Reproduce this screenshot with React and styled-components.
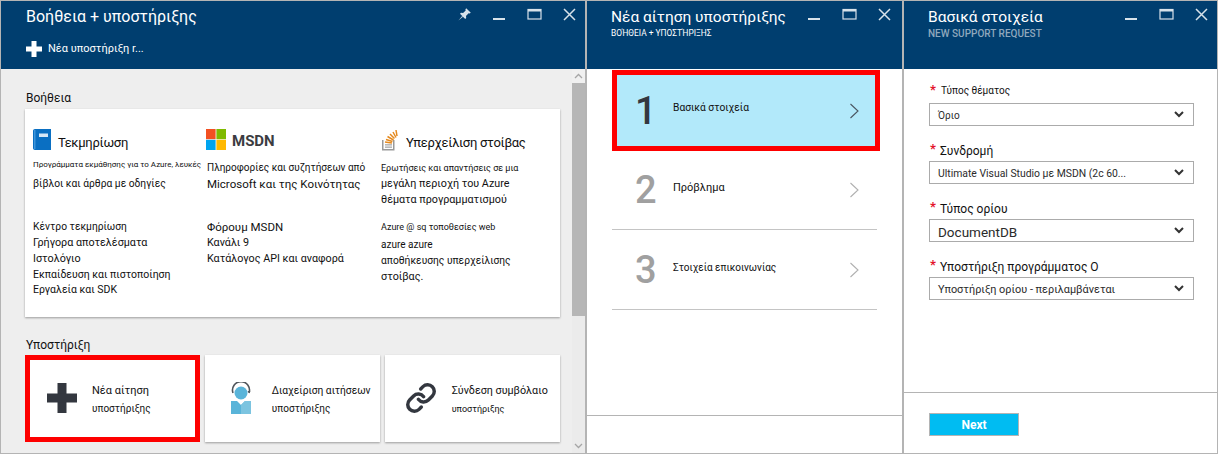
import React from 'react';
import styled, { createGlobalStyle } from 'styled-components';
import { Link as LinkIcon } from 'lucide-react';

const GlobalStyle = createGlobalStyle`
  html, body { margin: 0; padding: 0; background: #fff; }
  body { font-family: Roboto, "Liberation Sans", sans-serif; color: #111; }
  * { box-sizing: border-box; }
`;

const Page = styled.div`
  width: 1218px;
  height: 454px;
  display: flex;
  overflow: hidden;
  border: 1px solid #b4b4b4;
`;

const Blade = styled.section`
  width: ${(p) => p.$width}px;
  flex: ${(p) => (p.$grow ? 1 : 'none')};
  display: flex;
  flex-direction: column;
  border-right: ${(p) => p.$divider}px solid #b4b4b4;
`;

const Header = styled.header`
  height: 68px;
  flex: none;
  background: #003e6f;
  color: #fff;
  display: flex;
  flex-direction: column;
  padding-left: ${(p) => p.$left}px;
`;

const TitleRow = styled.div`
  display: flex;
  justify-content: space-between;
  padding-right: ${(p) => p.$right}px;
`;

const TitleBlock = styled.div`
  padding-top: 5px;
`;

const Title = styled.h1`
  margin: 0;
  font-size: ${(p) => p.$size || 15.5}px;
  line-height: 22px;
  font-weight: 400;
  white-space: nowrap;
`;

const Subtitle = styled.div`
  font-size: ${(p) => p.$size}px;
  line-height: 11px;
  font-weight: ${(p) => p.$weight || 400};
  color: ${(p) => p.$color || '#fff'};
  white-space: nowrap;
`;

const Controls = styled.div`
  display: flex;
  gap: 20px;
  padding-top: 6px;
  flex: none;
`;

const ControlIcon = styled.svg`
  width: 15px;
  height: 15px;
  display: block;
  color: #d7e2ea;
`;

const CommandBar = styled.div`
  display: flex;
  align-items: center;
  gap: 6px;
  margin-top: 13px;
  font-size: 11px;
  line-height: 16px;
`;

const BladeBody = styled.div`
  flex: 1;
  min-height: 0;
  display: flex;
  background: ${(p) => p.$bg || '#fff'};
`;

const Scroller = styled.div`
  flex: 1;
  min-width: 0;
  padding: 21px 12px 0 24px;
`;

const SectionLabel = styled.div`
  font-size: 12px;
  line-height: 16px;
  margin-left: ${(p) => p.$left || 1}px;
  margin-top: ${(p) => p.$top || 0}px;
`;

const Card = styled.div`
  margin-top: 3px;
  height: 208px;
  background: #fff;
  box-shadow: 0 1px 2px rgba(0, 0, 0, 0.35);
  padding: 17px 0 0 8px;
  display: grid;
  grid-template-columns: 174px 174px 1fr;
`;

const Column = styled.div`
  display: flex;
  flex-direction: column;
`;

const ColumnHead = styled.div`
  height: 34px;
  display: flex;
  align-items: flex-start;
  gap: ${(p) => p.$gap}px;
  margin-left: ${(p) => p.$shift || 0}px;
  padding-top: 3px;
`;

const ColumnTitle = styled.span`
  font-size: 13px;
  letter-spacing: -0.3px;
  line-height: 28px;
  white-space: nowrap;
`;

const MsdnTitle = styled.span`
  font-size: 15px;
  font-weight: 700;
  line-height: 24px;
  color: #3c3c41;
`;

const Blurb = styled.div`
  height: 59px;
`;

const Line = styled.div`
  font-size: ${(p) => p.$size || 10.75}px;
  line-height: ${(p) => p.$lh || 16}px;
  white-space: nowrap;
`;

const TileRow = styled.div`
  display: flex;
  gap: 4.5px;
  margin-top: 2px;
`;

const Tile = styled.div`
  flex: 1 1 0;
  min-width: 0;
  height: 87px;
  background: #fff;
  display: flex;
  align-items: center;
  box-shadow: ${(p) =>
    p.$selected ? 'inset 0 0 0 5px #fe0000' : '0 1px 2px rgba(0, 0, 0, 0.35)'};
`;

const TileIcon = styled.div`
  width: 67px;
  flex: none;
  padding: 0 0 2px 6px;
  display: flex;
  justify-content: center;
  color: #33373f;
`;

const TileText = styled.div`
  display: flex;
  flex-direction: column;
  gap: 2px;
  padding-top: 2px;
  white-space: nowrap;
`;

const TileName = styled.span`
  font-size: ${(p) => p.$size || 11}px;
  line-height: 16px;
`;

const TileHint = styled.span`
  font-size: ${(p) => p.$size || 10}px;
  line-height: 16px;
`;

const Scrollbar = styled.div`
  width: 13px;
  flex: none;
  background: #ebebeb;
  display: flex;
  flex-direction: column;
  justify-content: space-between;
`;

const ScrollArrow = styled.div`
  height: 14px;
  background: ${(p) => p.$bg || 'transparent'};
  display: flex;
  align-items: center;
  justify-content: center;
  color: #a6a6a6;
`;

const ScrollThumb = styled.div`
  width: 13px;
  height: 233px;
  background: #b6b6b6;
`;

const ScrollTop = styled.div`
  display: flex;
  flex-direction: column;
`;

const Steps = styled.div`
  flex: 1;
  padding: 1px 0 0 25px;
  display: flex;
  flex-direction: column;
`;

const Step = styled.div`
  width: ${(p) => (p.$active ? 268 : 265)}px;
  height: ${(p) => p.$height}px;
  display: flex;
  align-items: center;
  background: ${(p) => (p.$active ? '#b2e9fa' : '#fff')};
  border: ${(p) => (p.$active ? '5px solid #fe0000' : 'none')};
  border-bottom: ${(p) => (p.$active ? '5px solid #fe0000' : '1px solid #c4c4c4')};
  padding-left: ${(p) => (p.$active ? 18 : 23)}px;
`;

const StepNumber = styled.span`
  width: 38px;
  font-size: 38px;
  line-height: 44px;
  font-weight: 500;
  color: ${(p) => (p.$active ? '#33373f' : '#a0a0a0')};
  flex: none;
`;

const StepText = styled.span`
  flex: 1;
  font-size: ${(p) => p.$size || 10.5}px;
  line-height: 16px;
  padding-bottom: ${(p) => (p.$active ? 6 : 4)}px;
`;

const StepArrow = styled.svg`
  width: 10px;
  height: 16px;
  flex: none;
  margin-right: ${(p) => (p.$active ? 16 : 18)}px;
  color: ${(p) => (p.$active ? '#4a5560' : '#b0b0b0')};
`;

const FooterSlot = styled.div`
  height: ${(p) => p.$height}px;
  flex: none;
  border-top: 1px solid #b4b4b4;
  padding: 20px 0 0 25px;
`;

const NextButton = styled.button`
  width: 90px;
  height: 23px;
  border: 1px solid #b4b4b4;
  background: #00bcf2;
  color: #fff;
  font-family: Roboto, sans-serif;
  font-size: 12px;
  font-weight: 700;
  padding: 0;
  display: block;
`;

const Form = styled.div`
  flex: 1;
  padding: 12px 23px 0 25px;
  display: flex;
  flex-direction: column;
`;

const Field = styled.div`
  margin-bottom: 17px;
`;

const FieldLabel = styled.div`
  height: ${(p) => (p.$small ? 22 : 18)}px;
  padding-bottom: ${(p) => (p.$small ? 4 : 2)}px;
  display: flex;
  align-items: center;
  font-size: ${(p) => (p.$small ? 10 : 12)}px;
  white-space: nowrap;
`;

const Star = styled.span`
  color: #e3142a;
  width: ${(p) => (p.$small ? 12 : 11)}px;
  margin-top: ${(p) => (p.$small ? 0 : -5)}px;
  font-size: 13px;
  line-height: 12px;
  font-weight: 700;
  padding-left: 1px;
  flex: none;
`;

const Select = styled.div`
  width: 265px;
  height: 23px;
  border: 1px solid #ababab;
  display: flex;
  align-items: center;
  justify-content: space-between;
  padding: 2px 9px 0 8px;
  font-size: ${(p) => p.$size}px;
  color: #2b2b2b;
  white-space: nowrap;
`;

const Caret = styled.svg`
  width: 10px;
  height: 7px;
  flex: none;
  margin-top: -2px;
`;

function Pin() {
  return (
    <ControlIcon viewBox="0 0 15 15" fill="currentColor">
      <path d="M9.2 1.2 13.8 5.8 12.6 6.6 11.6 6.3 9 8.9 9.2 11 8.2 12 3 6.8 4 5.8 6.1 6 8.7 3.4 8.4 2.4Z" />
      <path d="M5.2 9 1.4 13.6 6 9.8Z" />
    </ControlIcon>
  );
}

function Minimize() {
  return (
    <ControlIcon viewBox="0 0 15 15" fill="currentColor">
      <rect x="1" y="11" width="12" height="2" />
    </ControlIcon>
  );
}

function Maximize() {
  return (
    <ControlIcon viewBox="0 0 15 15" fill="none" stroke="currentColor">
      <rect x="1" y="2.5" width="13" height="9.5" strokeWidth="1.2" />
      <rect x="1" y="2" width="13" height="2.5" fill="currentColor" stroke="none" />
    </ControlIcon>
  );
}

function Close() {
  return (
    <ControlIcon viewBox="0 0 15 15" fill="none" stroke="currentColor" strokeWidth="1.5">
      <path d="M2 2 13 13M13 2 2 13" />
    </ControlIcon>
  );
}

function BookIcon() {
  return (
    <svg width="18" height="21" viewBox="0 0 18 21">
      <path d="M2 0H18V21H2C.8 21 0 20.2 0 19V2C0 .8.8 0 2 0Z" fill="#0a6fc2" />
      <rect x="1" y="1" width="1.5" height="19" fill="#3f95da" />
      <rect x="6" y="4.5" width="9" height="3.5" fill="#d6e8f7" />
    </svg>
  );
}

function MsLogo() {
  return (
    <svg width="20" height="21" viewBox="0 0 20 21">
      <rect width="9.6" height="10.2" fill="#f25022" />
      <rect x="10.4" width="9.6" height="10.2" fill="#7fba00" />
      <rect y="10.8" width="9.6" height="10.2" fill="#00a4ef" />
      <rect x="10.4" y="10.8" width="9.6" height="10.2" fill="#ffb900" />
    </svg>
  );
}

function StackIcon() {
  return (
    <svg width="17" height="22" viewBox="0 0 17 22">
      <path d="M1 11H2.5V20H12V11H13.5V21.5H1Z" fill="#9a9a9a" />
      <g fill="#a8a8a8">
        <rect x="4" y="17.5" width="7" height="1.3" />
        <rect x="4" y="15.2" width="7" height="1.3" />
      </g>
      <g stroke="#e58a1f" strokeWidth="1.5">
        <path d="M4 13 11 14" />
        <path d="M5 10.5 11.5 12.5" />
        <path d="M6.5 7.5 12.5 11" />
        <path d="M9 5 13.5 9.5" />
        <path d="M12 3 15 8.5" />
        <path d="M15 1 16 7" />
      </g>
    </svg>
  );
}

function PersonIcon() {
  return (
    <svg width="22" height="32" viewBox="0 0 22 32">
      <path d="M3 11A8.5 8.5 0 1 1 19 11" fill="none" stroke="#50565c" strokeWidth="1.6" />
      <path d="M19 11 20.5 9H17.5Z" fill="#50565c" />
      <circle cx="11" cy="11" r="6.5" fill="#59b4d9" />
      <path d="M1 19H7L11 23 15 19H21V32H1Z" fill="#59b4d9" />
      <path d="M11 23 15 19H21V32H11Z" fill="#7cc4e0" />
    </svg>
  );
}

function PlusIcon({ size, color, bar }) {
  const at = (size - bar) / 2;
  return (
    <svg width={size} height={size} viewBox={`0 0 ${size} ${size}`} fill={color}>
      <rect x={at} width={bar} height={size} />
      <rect y={at} width={size} height={bar} />
    </svg>
  );
}

function Chevron({ active }) {
  return (
    <StepArrow $active={active} viewBox="0 0 10 16" fill="none" stroke="currentColor" strokeWidth="1.1">
      <path d="M1.5 1 9 8 1.5 15" />
    </StepArrow>
  );
}

function ScrollChevron({ down }) {
  return (
    <svg width="9" height="6" viewBox="0 0 9 6" fill="none" stroke="currentColor" strokeWidth="1.3">
      <path d={down ? 'M1 1 4.5 4.5 8 1' : 'M1 5 4.5 1.5 8 5'} />
    </svg>
  );
}

function Dropdown({ size, children }) {
  return (
    <Select $size={size}>
      {children}
      <Caret viewBox="0 0 10 7" fill="none" stroke="#333" strokeWidth="2">
        <path d="M1 1 5 5 9 1" />
      </Caret>
    </Select>
  );
}

const fields = [
  { label: 'Τύπος θέματος', small: true, size: 10, value: 'Όριο' },
  { label: 'Συνδρομή', size: 10.4, value: 'Ultimate Visual Studio με MSDN (2c 60...' },
  { label: 'Τύπος ορίου', size: 13.5, value: 'DocumentDB' },
  { label: 'Υποστήριξη προγράμματος Ο', size: 10.9, value: 'Υποστήριξη ορίου - περιλαμβάνεται' },
];

export default function App() {
  return (
    <Page>
      <GlobalStyle />
      <Blade $width={586} $divider={2}>
        <Header $left={25}>
          <TitleRow $right={8}>
            <TitleBlock>
              <Title $size={16}>Βοήθεια + υποστήριξης</Title>
            </TitleBlock>
            <Controls>
              <Pin />
              <Minimize />
              <Maximize />
              <Close />
            </Controls>
          </TitleRow>
          <CommandBar>
            <PlusIcon size={16} color="#fff" bar={5} />
            Νέα υποστήριξη r...
          </CommandBar>
        </Header>
        <BladeBody $bg="#eeeeee">
          <Scroller>
            <SectionLabel>Βοήθεια</SectionLabel>
            <Card>
              <Column>
                <ColumnHead $gap={7}>
                  <BookIcon />
                  <ColumnTitle>Τεκμηρίωση</ColumnTitle>
                </ColumnHead>
                <Blurb>
                  <Line $size={8} $lh={10}>Προγράμματα εκμάθησης για το Azure, λευκές</Line>
                  <Line $size={10.25} $lh={28}>βίβλοι και άρθρα με οδηγίες</Line>
                </Blurb>
                <Line $size={10.25}>Κέντρο τεκμηρίωση</Line>
                <Line>Γρήγορα αποτελέσματα</Line>
                <Line>Ιστολόγιο</Line>
                <Line $size={10.5}>Εκπαίδευση και πιστοποίηση</Line>
                <Line $size={10.5} $lh={14}>Εργαλεία και SDK</Line>
              </Column>
              <Column>
                <ColumnHead $gap={6} $shift={-1}>
                  <MsLogo />
                  <MsdnTitle>MSDN</MsdnTitle>
                </ColumnHead>
                <Blurb>
                  <Line $size={10}>Πληροφορίες και συζητήσεων από</Line>
                  <Line $size={11.5}>Microsoft και της Κοινότητας</Line>
                </Blurb>
                <Line $size={11.5}>Φόρουμ MSDN</Line>
                <Line>Κανάλι 9</Line>
                <Line>Κατάλογος API και αναφορά</Line>
              </Column>
              <Column>
                <ColumnHead $gap={8}>
                  <StackIcon />
                  <ColumnTitle>Υπερχείλιση στοίβας</ColumnTitle>
                </ColumnHead>
                <Blurb>
                  <Line $size={9}>Ερωτήσεις και απαντήσεις σε μια</Line>
                  <Line>μεγάλη περιοχή του Azure</Line>
                  <Line>θέματα προγραμματισμού</Line>
                </Blurb>
                <Line $size={9}>Azure @ sq τοποθεσίες web</Line>
                <Line $size={10} $lh={20}>azure azure</Line>
                <Line $size={10.25} $lh={12}>αποθήκευσης υπερχείλισης</Line>
                <Line $lh={20}>στοίβας.</Line>
              </Column>
            </Card>
            <SectionLabel $left={0} $top={20}>Υποστήριξη</SectionLabel>
            <TileRow>
              <Tile $selected>
                <TileIcon>
                  <PlusIcon size={30} color="#33373f" bar={9} />
                </TileIcon>
                <TileText>
                  <TileName>Νέα αίτηση</TileName>
                  <TileHint>υποστήριξης</TileHint>
                </TileText>
              </Tile>
              <Tile>
                <TileIcon>
                  <PersonIcon />
                </TileIcon>
                <TileText>
                  <TileName $size={10.25}>Διαχείριση αιτήσεων</TileName>
                  <TileHint>υποστήριξης</TileHint>
                </TileText>
              </Tile>
              <Tile>
                <TileIcon>
                  <LinkIcon size={32} strokeWidth={2.6} />
                </TileIcon>
                <TileText>
                  <TileName $size={10.75}>Σύνδεση συμβόλαιο</TileName>
                  <TileHint $size={9}>υποστήριξης</TileHint>
                </TileText>
              </Tile>
            </TileRow>
          </Scroller>
          <Scrollbar>
            <ScrollTop>
              <ScrollArrow $bg="#f0f0f0">
                <ScrollChevron />
              </ScrollArrow>
              <ScrollThumb />
            </ScrollTop>
            <ScrollArrow>
              <ScrollChevron down />
            </ScrollArrow>
          </Scrollbar>
        </BladeBody>
      </Blade>

      <Blade $width={317} $divider={2}>
        <Header $left={24}>
          <TitleRow $right={10}>
            <TitleBlock>
              <Title>Νέα αίτηση υποστήριξης</Title>
              <Subtitle $size={8.4}>ΒΟΉΘΕΙΑ + ΥΠΟΣΤΉΡΙΞΗΣ</Subtitle>
            </TitleBlock>
            <Controls>
              <Minimize />
              <Maximize />
              <Close />
            </Controls>
          </TitleRow>
        </Header>
        <BladeBody>
          <Steps>
            <Step $active $height={81}>
              <StepNumber $active>1</StepNumber>
              <StepText $active $size={10.25}>Βασικά στοιχεία</StepText>
              <Chevron active />
            </Step>
            <Step $height={79}>
              <StepNumber>2</StepNumber>
              <StepText $size={11}>Πρόβλημα</StepText>
              <Chevron />
            </Step>
            <Step $height={80}>
              <StepNumber>3</StepNumber>
              <StepText $size={10}>Στοιχεία επικοινωνίας</StepText>
              <Chevron />
            </Step>
          </Steps>
        </BladeBody>
        <FooterSlot $height={38} />
      </Blade>

      <Blade $grow $divider={0}>
        <Header $left={24}>
          <TitleRow $right={8}>
            <TitleBlock>
              <Title>Βασικά στοιχεία</Title>
              <Subtitle $size={10} $weight={500} $color="#8fa8bd">NEW SUPPORT REQUEST</Subtitle>
            </TitleBlock>
            <Controls>
              <Minimize />
              <Maximize />
              <Close />
            </Controls>
          </TitleRow>
        </Header>
        <BladeBody>
          <Form>
            {fields.map((f) => (
              <Field key={f.label}>
                <FieldLabel $small={f.small}>
                  <Star $small={f.small}>*</Star>
                  {f.label}
                </FieldLabel>
                <Dropdown size={f.size}>{f.value}</Dropdown>
              </Field>
            ))}
          </Form>
        </BladeBody>
        <FooterSlot $height={61}>
          <NextButton>Next</NextButton>
        </FooterSlot>
      </Blade>
    </Page>
  );
}
